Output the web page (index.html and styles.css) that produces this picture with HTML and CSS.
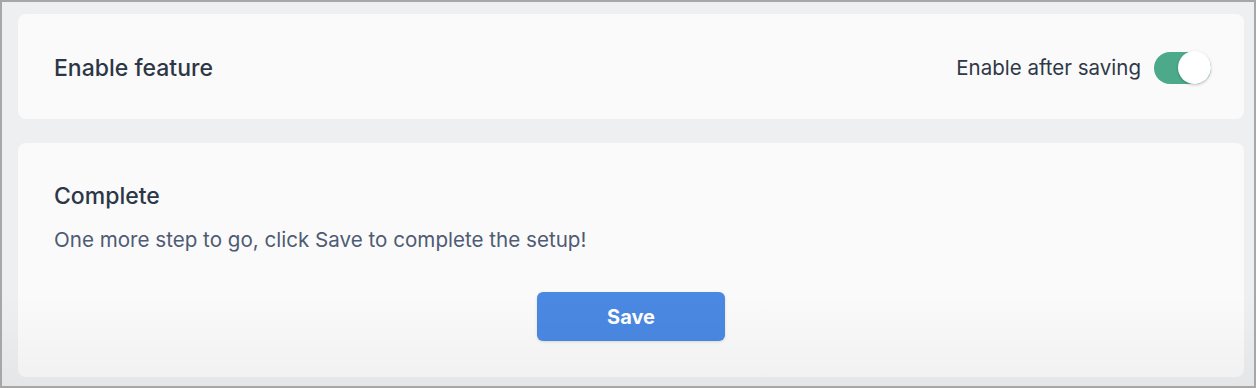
FILE: index.html
```html
<!DOCTYPE html>
<html lang="en">
<head>
<meta charset="utf-8">
<link rel="stylesheet" href="styles.css">
</head>
<body>
<div class="frame">
  <section class="card card-feature">
    <h2 class="title">Enable feature</h2>
    <div class="toggle-row">
      <span class="toggle-label">Enable after saving</span>
      <span class="toggle" role="switch" aria-checked="true"><span class="knob"></span></span>
    </div>
  </section>
  <section class="card card-complete">
    <h2 class="title">Complete</h2>
    <p class="desc">One more step to go, click Save to complete the setup!</p>
    <div class="actions">
      <button class="btn-save" type="button">Save</button>
    </div>
  </section>
  <div class="fade"></div>
</div>
</body>
</html>
```

FILE: styles.css
```css
* { box-sizing: border-box; }
html, body { margin: 0; padding: 0; }
body {
  font-family: Inter, "Noto Sans", "Liberation Sans", sans-serif;
  background: #eeeff1;
}
.frame {
  position: relative;
  width: 1256px;
  height: 388px;
  border: 2px solid #a7a7a7;
  background: #eeeff1;
  padding: 12px 10px 9px 16px;
  display: flex;
  flex-direction: column;
  gap: 24px;
  overflow: hidden;
}
.card {
  background: #fafafa;
  border-radius: 8px;
}
.card-feature {
  height: 105px;
  flex: none;
  display: flex;
  align-items: center;
  justify-content: space-between;
  padding: 2px 33px 0 36px;
}
.title {
  margin: 0;
  font-size: 23px;
  font-weight: 500;
  line-height: 30px;
  color: #2d3646;
}
.toggle-row {
  display: flex;
  align-items: center;
  gap: 13px;
}
.toggle-label {
  font-size: 20.5px;
  color: #2f3848;
  line-height: 28px;
}
.toggle {
  position: relative;
  display: block;
  width: 57px;
  height: 32px;
  border-radius: 16px;
  background: #4caa8b;
}
.knob {
  position: absolute;
  right: 0;
  top: -1px;
  width: 33px;
  height: 33px;
  border-radius: 50%;
  background: #ffffff;
  box-shadow: 0 1px 3px rgba(0,0,0,0.22);
}
.card-complete {
  flex: 1;
  padding: 38px 36px 35px 36px;
  display: flex;
  flex-direction: column;
}
.desc {
  margin: 15px 0 0;
  font-size: 20.6px;
  line-height: 28px;
  color: #4f5b74;
}
.actions {
  margin-top: 38px;
  display: flex;
  justify-content: center;
}
.btn-save {
  width: 188px;
  height: 49px;
  border: none;
  border-radius: 6px;
  background: #4a88e2;
  color: #ffffff;
  font-family: Inter, "Noto Sans", "Liberation Sans", sans-serif;
  font-size: 20px;
  font-weight: 700;
  box-shadow: 0 1px 3px rgba(0,0,0,0.12);
  cursor: pointer;
}
.fade {
  position: absolute;
  left: 0;
  right: 0;
  bottom: 0;
  height: 90px;
  background: linear-gradient(to bottom, rgba(0,0,0,0), rgba(0,0,0,0.04));
  pointer-events: none;
}
```
